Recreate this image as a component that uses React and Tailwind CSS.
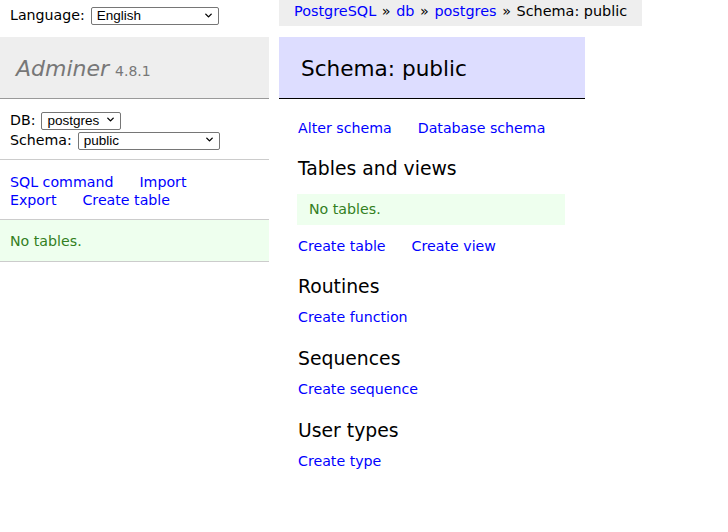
import { ChevronDown } from "lucide-react";

function Select({ value, width }) {
  return (
    <span className={`relative inline-block align-middle ${width}`}>
      <select
        defaultValue={value}
        className="h-[18px] w-full appearance-none rounded-[2px] border border-[#767676] bg-white pl-[5px] pr-5 text-[13.5px] leading-[16px] text-black [font-family:'Liberation_Sans',Arial,sans-serif]"
      >
        <option>{value}</option>
      </select>
      <ChevronDown className="pointer-events-none absolute right-[5px] top-[4px] h-[11px] w-[11px] text-black" strokeWidth={3} />
    </span>
  );
}

function A({ children, className = "" }) {
  return (
    <a href="#" className={`text-[#00f] no-underline ${className}`}>
      {children}
    </a>
  );
}

export default function App() {
  return (
    <div className="min-h-[532px] w-[728px] bg-white text-[14.2px] leading-[18px] text-black [font-family:'DejaVu_Sans',Verdana,sans-serif]">
      {/* top row */}
      <div className="flex h-[37px]">
        <div className="flex h-[30px] w-[279px] items-center pl-[10px]">
          <span className="mr-[6px]">Language:</span>
          <Select value="English" width="w-[128px]" />
        </div>
        <div className="h-[26px] whitespace-nowrap bg-[#eee] px-[15px] text-[14.4px] leading-[23px]">
          <A>PostgreSQL</A> <span className="mx-[1px]">»</span> <A>db</A> <span className="mx-[1px]">»</span> <A>postgres</A> <span className="mx-[1px]">»</span> Schema: public
        </div>
      </div>

      <div className="flex gap-[10px]">
        {/* menu */}
        <div className="w-[269px]">
          <h1 className="flex h-[62px] items-center border-b border-[#999] bg-[#eee] pl-[16px] pt-[2px] text-[#777]">
            <span className="text-[22px] italic">Adminer</span>
            <span className="ml-[6px] mt-[4px] text-[14px]">4.8.1</span>
          </h1>
          <div className="border-b border-[#ccc] pb-[10px] pl-[10px] pt-[11px] leading-[20px]">
            <div className="flex items-center">
              <span className="mr-[6px]">DB:</span>
              <Select value="postgres" width="w-[80px]" />
            </div>
            <div className="flex h-[19px] items-center">
              <span className="mr-[6px]">Schema:</span>
              <Select value="public" width="w-[142px]" />
            </div>
          </div>
          <div className="border-b border-[#ccc] pb-[10px] pl-[10px] pt-[13px]">
            <div>
              <A>SQL command</A>
              <A className="ml-[26px]">Import</A>
            </div>
            <div>
              <A>Export</A>
              <A className="ml-[26px]">Create table</A>
            </div>
          </div>
          <div className="h-[42px] border-b border-[#ccc] bg-[#efe] pl-[10px] pt-[12px] text-[#338022]">
            No tables.
          </div>
        </div>

        {/* content */}
        <div className="w-[306px]">
          <h1 className="flex h-[62px] items-center border-b border-black bg-[#ddf] pl-[22px] pt-[2px] text-[21.6px] font-normal">
            Schema: public
          </h1>
          <div className="pl-[19px] pr-[20px]">
            <p className="mt-[20px]">
              <A>Alter schema</A>
              <A className="ml-[26px]">Database schema</A>
            </p>
            <h2 className="mt-[20px] text-[18.8px] leading-[24px]">Tables and views</h2>
            <div className="-ml-[1px] mt-[13px] h-[31px] bg-[#efe] pl-[12px] pt-[6px] text-[#338022]">
              No tables.
            </div>
            <p className="mt-[12px]">
              <A>Create table</A>
              <A className="ml-[26px]">Create view</A>
            </p>
            <h2 className="mt-[20px] text-[18.8px] leading-[24px]">Routines</h2>
            <p className="mt-[9px]">
              <A>Create function</A>
            </p>
            <h2 className="mt-[21px] text-[18.8px] leading-[24px]">Sequences</h2>
            <p className="mt-[9px]">
              <A>Create sequence</A>
            </p>
            <h2 className="mt-[21px] text-[18.8px] leading-[24px]">User types</h2>
            <p className="mt-[9px]">
              <A>Create type</A>
            </p>
          </div>
        </div>
      </div>
    </div>
  );
}
